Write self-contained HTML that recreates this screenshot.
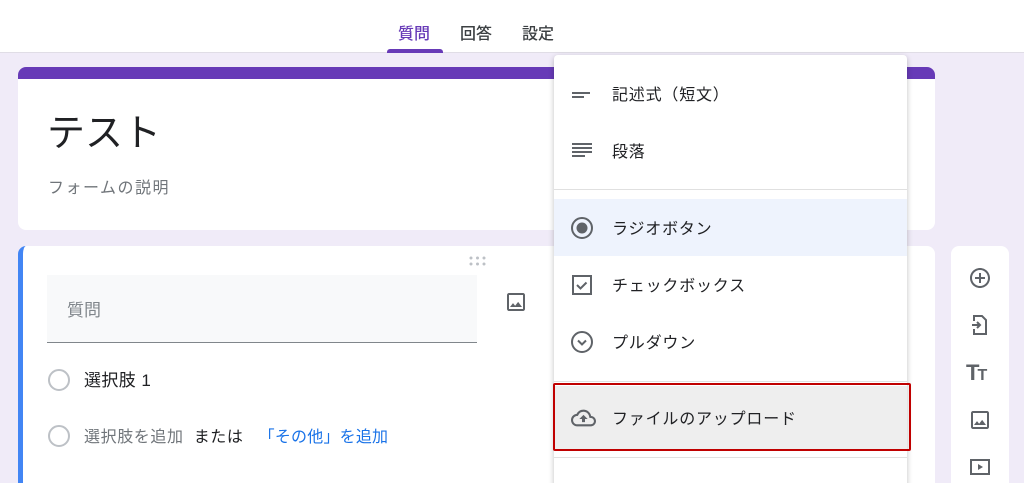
<!DOCTYPE html>
<html style="width:1024px;height:483px;overflow:hidden"><head><meta charset="utf-8"><style>
*{margin:0;padding:0;box-sizing:border-box}
body{width:1024px;height:483px;overflow:hidden;background:#f0ebf8;font-family:"Liberation Sans","Noto Sans CJK JP",sans-serif;position:relative;color:#202124}
.a{position:absolute}
.hdr{left:0;top:0;width:1024px;height:53px;background:#fff;border-bottom:1px solid #e0dde6}
.tab{top:20px;font-size:16px;color:#3c4043;font-weight:500}
.card{background:#fff;border-radius:8px}
.menu{left:554px;top:55px;width:353px;height:440px;background:#fff;border-radius:4px;box-shadow:0 2px 6px rgba(0,0,0,.25)}
.it{position:absolute;left:0;width:353px;height:57px}
.it span{position:absolute;left:58px;top:50%;transform:translateY(-55%);font-size:16px;letter-spacing:0.8px;color:#202124}
.it svg{position:absolute;left:16px;top:50%;transform:translateY(-50%)}
.div{position:absolute;left:0;width:353px;height:1px;background:#e0e0e0}
.side svg{position:absolute;left:17px}
</style></head><body>
<div class="a hdr"></div>
<div class="a tab" style="left:398px;color:#673ab7">質問</div>
<div class="a tab" style="left:460px">回答</div>
<div class="a tab" style="left:522px">設定</div>
<div class="a" style="left:387px;top:49px;width:56px;height:4px;background:#673ab7;border-radius:3px 3px 0 0"></div>

<div class="a card" style="left:18px;top:67px;width:917px;height:163px;overflow:hidden">
 <div style="height:12px;background:#673ab7"></div>
 <div class="a" style="left:29px;top:35px;font-size:38px;color:#202124">テスト</div>
 <div class="a" style="left:30px;top:107px;font-size:16px;letter-spacing:1.5px;color:#70757a">フォームの説明</div>
</div>

<div class="a card" style="left:18px;top:246px;width:917px;height:260px;overflow:hidden;border-left:5px solid #4285f4">
 <svg class="a" style="left:445px;top:10px" width="20" height="10"><g fill="#bdc1c6"><circle cx="3" cy="2" r="1.5"/><circle cx="9.5" cy="2" r="1.5"/><circle cx="16" cy="2" r="1.5"/><circle cx="3" cy="8" r="1.5"/><circle cx="9.5" cy="8" r="1.5"/><circle cx="16" cy="8" r="1.5"/></g></svg>
 <div class="a" style="left:24px;top:29px;width:430px;height:68px;background:#f8f9fa;border-bottom:1px solid #80868b"></div>
 <div class="a" style="left:44px;top:50px;font-size:17px;color:#80868b">質問</div>
 <svg class="a" style="left:481px;top:44px" width="24" height="24" viewBox="0 0 24 24"><path fill="#5f6368" d="M19 5v14H5V5h14m0-2H5c-1.1 0-2 .9-2 2v14c0 1.1.9 2 2 2h14c1.1 0 2-.9 2-2V5c0-1.1-.9-2-2-2zm-4.86 8.86l-3 3.87L9 13.14 6 17h12l-3.86-5.14z"/></svg>
 <div class="a" style="left:25px;top:123px;width:22px;height:22px;border:2px solid #bdc1c6;border-radius:50%"></div>
 <div class="a" style="left:61px;top:120px;font-size:17px;letter-spacing:0.4px">選択肢 1</div>
 <div class="a" style="left:25px;top:179px;width:22px;height:22px;border:2px solid #bdc1c6;border-radius:50%"></div>
 <div class="a" style="left:61px;top:177px;font-size:16px;letter-spacing:0.6px;color:#70757a;white-space:nowrap">選択肢を追加 <span style="color:#202124">&nbsp;または&nbsp;&nbsp;</span> <span style="color:#1a73e8;letter-spacing:0.2px">「その他」を追加</span></div>
</div>

<div class="a card side" style="left:951px;top:246px;width:58px;height:260px">
 <svg style="top:20px" width="24" height="24" viewBox="0 0 24 24"><path fill="#5f6368" d="M13 7h-2v4H7v2h4v4h2v-4h4v-2h-4V7zm-1-5C6.48 2 2 6.48 2 12s4.48 10 10 10 10-4.48 10-10S17.52 2 12 2zm0 18c-4.410 0-8-3.59-8-8s3.59-8 8-8 8 3.59 8 8-3.59 8-8 8z"/></svg>
 <svg style="top:67px" width="24" height="24" viewBox="0 0 24 24"><path fill="none" stroke="#5f6368" stroke-width="2" d="M6 8V3h8l4 4v14H6v-5M4 12h8M9 9l3 3-3 3"/></svg>
 <div class="a" style="left:15px;top:114px;font-size:22px;font-weight:bold;color:#5f6368;letter-spacing:-2px">T<span style="font-size:16px">T</span></div>
 <svg style="top:162px" width="24" height="24" viewBox="0 0 24 24"><path fill="#5f6368" d="M19 5v14H5V5h14m0-2H5c-1.1 0-2 .9-2 2v14c0 1.1.9 2 2 2h14c1.1 0 2-.9 2-2V5c0-1.1-.9-2-2-2zm-4.86 8.86l-3 3.87L9 13.14 6 17h12l-3.86-5.14z"/></svg>
 <svg style="top:209px" width="24" height="24" viewBox="0 0 24 24"><path fill="none" stroke="#5f6368" stroke-width="2" d="M3 5h18v14H3z"/><path fill="#5f6368" d="M10 9l5 3-5 3z"/></svg>
</div>

<div class="a menu">
 <div class="it" style="top:10px"><svg width="24" height="24" viewBox="0 0 24 24"><path fill="#5f6368" d="M2 10h18v2H2zm0 4h12v2H2z"/></svg><span>記述式（短文）</span></div>
 <div class="it" style="top:67px"><svg width="24" height="24" viewBox="0 0 24 24"><path fill="#5f6368" d="M2 4h20v2H2zm0 4h20v2H2zm0 4h20v2H2zm0 4h13v2H2z"/></svg><span>段落</span></div>
 <div class="div" style="top:134px"></div>
 <div class="it" style="top:144px;background:#eef3fd"><svg width="24" height="24" viewBox="0 0 24 24"><circle cx="12" cy="12" r="10" fill="none" stroke="#5f6368" stroke-width="2"/><circle cx="12" cy="12" r="5.5" fill="#5f6368"/></svg><span>ラジオボタン</span></div>
 <div class="it" style="top:201px"><svg width="24" height="24" viewBox="0 0 24 24"><path fill="none" stroke="#5f6368" stroke-width="2" d="M3 3h18v18H3zM7 12l3.5 3.5 6-6"/></svg><span>チェックボックス</span></div>
 <div class="it" style="top:258px"><svg width="24" height="24" viewBox="0 0 24 24"><circle cx="12" cy="12" r="10" fill="none" stroke="#5f6368" stroke-width="2"/><path fill="none" stroke="#5f6368" stroke-width="2" d="M8 10.5l4 4 4-4"/></svg><span>プルダウン</span></div>
 <div class="div" style="top:326px"></div>
 <div class="it" style="top:331px;height:64px;background:#eeeeee"><svg width="27" height="25" viewBox="0 0 24 24"><path fill="#5f6368" d="M19.35 10.04A7.49 7.49 0 0012 4C9.11 4 6.6 5.64 5.35 8.04A5.994 5.994 0 000 14c0 3.31 2.69 6 6 6h13c2.76 0 5-2.24 5-5 0-2.64-2.05-4.78-4.65-4.96zM19 18H6c-2.21 0-4-1.79-4-4 0-2.05 1.53-3.76 3.56-3.97l1.07-.11.5-.95A5.47 5.47 0 0112 6c2.62 0 4.88 1.86 5.39 4.43l.3 1.5 1.53.11A2.98 2.98 0 0122 15c0 1.65-1.35 3-3 3zM8 13h2.55v3h2.9v-3H16l-4-4z"/></svg><span>ファイルのアップロード</span></div>
 <div class="div" style="top:402px"></div>
</div>
<div class="a" style="left:553px;top:383px;width:358px;height:68px;border:2px solid #c00000;border-radius:2px"></div>
</body></html>
